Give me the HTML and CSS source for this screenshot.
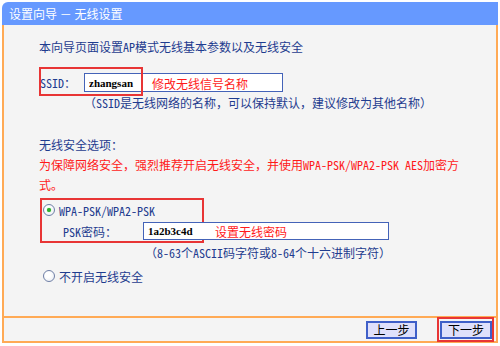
FILE: index.html
```html
<!DOCTYPE html>
<html lang="zh-CN">
<head>
    <meta charset="UTF-8">
    <title>设置向导 - 无线设置</title>
    <link rel="stylesheet" href="styles.css">
</head>
<body>
    <div class="panel">
        <div class="header">设置向导 － 无线设置</div>

        <div class="content">
            <p class="intro">本向导页面设置AP模式无线基本参数以及无线安全</p>

            <div class="row ssid-row">
                <label class="ssid-label" for="ssid">SSID：</label>
                <span class="field">
                    <input type="text" id="ssid" class="text-input ssid-input" value="zhangsan">
                    <span class="note ssid-note">修改无线信号名称</span>
                </span>
                <span class="mark ssid-mark"></span>
            </div>
            <p class="hint ssid-hint">（SSID是无线网络的名称，可以保持默认，建议修改为其他名称）</p>

            <p class="section-title">无线安全选项：</p>
            <p class="warning">为保障网络安全，强烈推荐开启无线安全，并使用WPA-PSK/WPA2-PSK AES加密方<br>式。</p>

            <div class="row radio-row">
                <span class="radio checked"></span>
                <span>WPA-PSK/WPA2-PSK</span>
                <span class="mark psk-mark"></span>
            </div>
            <div class="row psk-row">
                <label class="psk-label" for="psk">PSK密码：</label>
                <span class="field">
                    <input type="text" id="psk" class="text-input psk-input" value="1a2b3c4d">
                    <span class="note psk-note">设置无线密码</span>
                </span>
            </div>
            <p class="hint psk-hint">（8-63个ASCII码字符或8-64个十六进制字符）</p>

            <div class="row radio-row off-row">
                <span class="radio"></span>
                <span>不开启无线安全</span>
            </div>
        </div>

        <div class="actions">
            <button>上一步</button>
            <span class="next-wrap">
                <button>下一步</button>
                <span class="mark next-mark"></span>
            </span>
        </div>
    </div>
</body>
</html>
```

FILE: styles.css
```css
:root {
    --header-blue: #6699ff;
    --panel-bg: #f4f4f4;
    --border-orange: #ffaa55;
    --text-blue: #1f3c8f;
    --note-red: #ff1a1a;
    --mark-red: #e83535;
    --input-border: #4463b8;
}

body {
    margin: 0;
    padding: 2px 2px 0;
    background: #fff;
    font-family: "Noto Sans Mono CJK SC", "Noto Sans CJK SC", sans-serif;
    font-size: 12px;
    color: var(--text-blue);
}

p {
    margin: 0;
}

.panel {
    width: 496px;
}

.header {
    height: 23px;
    line-height: 23px;
    padding-left: 7px;
    background: var(--header-blue);
    border-top-left-radius: 6px;
    color: #fff;
    font-family: "Noto Sans CJK SC", sans-serif;
    font-size: 12px;
}

.content {
    height: 291px;
    box-sizing: border-box;
    padding: 14px 0 0 35px;
    background: var(--panel-bg);
    border-left: 2px solid var(--border-orange);
    border-right: 2px solid var(--border-orange);
}

.intro {
    line-height: 16px;
}

.row {
    position: relative;
    display: flex;
    align-items: center;
}

.ssid-row {
    margin-top: 18px;
    height: 19px;
}

.ssid-label {
    width: 45px;
    padding-left: 1px;
    box-sizing: border-box;
}

.field {
    position: relative;
    display: flex;
}

.text-input {
    box-sizing: border-box;
    margin: 0;
    padding: 0 4px;
    background: #fff;
    border: 1px solid var(--input-border);
    font-family: "Liberation Serif", serif;
    font-weight: bold;
    font-size: 11px;
    color: #000;
    outline: none;
}

.ssid-input {
    width: 199px;
    height: 19px;
}

.psk-input {
    width: 246px;
    height: 18px;
}

.note {
    position: absolute;
    top: 50%;
    transform: translateY(-50%);
    color: var(--note-red);
    font-family: "Noto Sans CJK SC", sans-serif;
    font-size: 12px;
    white-space: nowrap;
}

.ssid-note {
    left: 68px;
}

.psk-note {
    left: 72px;
}

/* red annotation boxes drawn over the form */
.mark {
    position: absolute;
    box-sizing: border-box;
    border: 2px solid var(--mark-red);
    pointer-events: none;
}

.ssid-mark {
    left: 0;
    top: -6px;
    width: 104px;
    height: 29px;
}

.psk-mark {
    left: 1px;
    top: -4px;
    width: 164px;
    height: 45px;
}

.hint {
    line-height: 16px;
}

.ssid-hint {
    margin: 3px 0 0 45px;
}

.section-title {
    margin-top: 26px;
    line-height: 16px;
}

.warning {
    margin-top: 2px;
    line-height: 20px;
    color: var(--note-red);
}

.radio-row {
    margin-top: 7px;
    height: 16px;
    gap: 4px;
}

.radio {
    position: relative;
    width: 12px;
    height: 12px;
    margin-left: 4px;
    box-sizing: border-box;
    border: 1px solid #6f7fa6;
    border-radius: 50%;
    background: radial-gradient(circle at 40% 40%, #fff 30%, #e4e8f0 100%);
}

.radio.checked::after {
    content: "";
    position: absolute;
    left: 3px;
    top: 3px;
    width: 4px;
    height: 4px;
    border-radius: 50%;
    background: #2fae2f;
    box-shadow: 0 0 1px #4c4;
}

.psk-row {
    margin-top: 4px;
    height: 18px;
}

.psk-label {
    width: 104px;
    padding-left: 24px;
    box-sizing: border-box;
}

.psk-hint {
    margin: 5px 0 0 106px;
}

.off-row {
    margin-top: 7px;
}

.actions {
    height: 20px;
    padding: 3px 4px 0 0;
    display: flex;
    justify-content: flex-end;
    align-items: flex-start;
    gap: 23px;
    background: var(--panel-bg);
    border: 2px solid var(--border-orange);
}

.actions button {
    width: 51px;
    height: 18px;
    margin: 0;
    padding: 0;
    background: #dfe0fb;
    border: 2px solid #3f5fc8;
    font-family: "Noto Sans CJK SC", sans-serif;
    font-size: 12px;
    line-height: 14px;
    color: #000;
    cursor: pointer;
}

.next-wrap {
    position: relative;
    display: flex;
}

.next-wrap button {
    width: 52px;
}

.next-mark {
    left: -3px;
    top: -4px;
    width: 57px;
    height: 25px;
}
```
